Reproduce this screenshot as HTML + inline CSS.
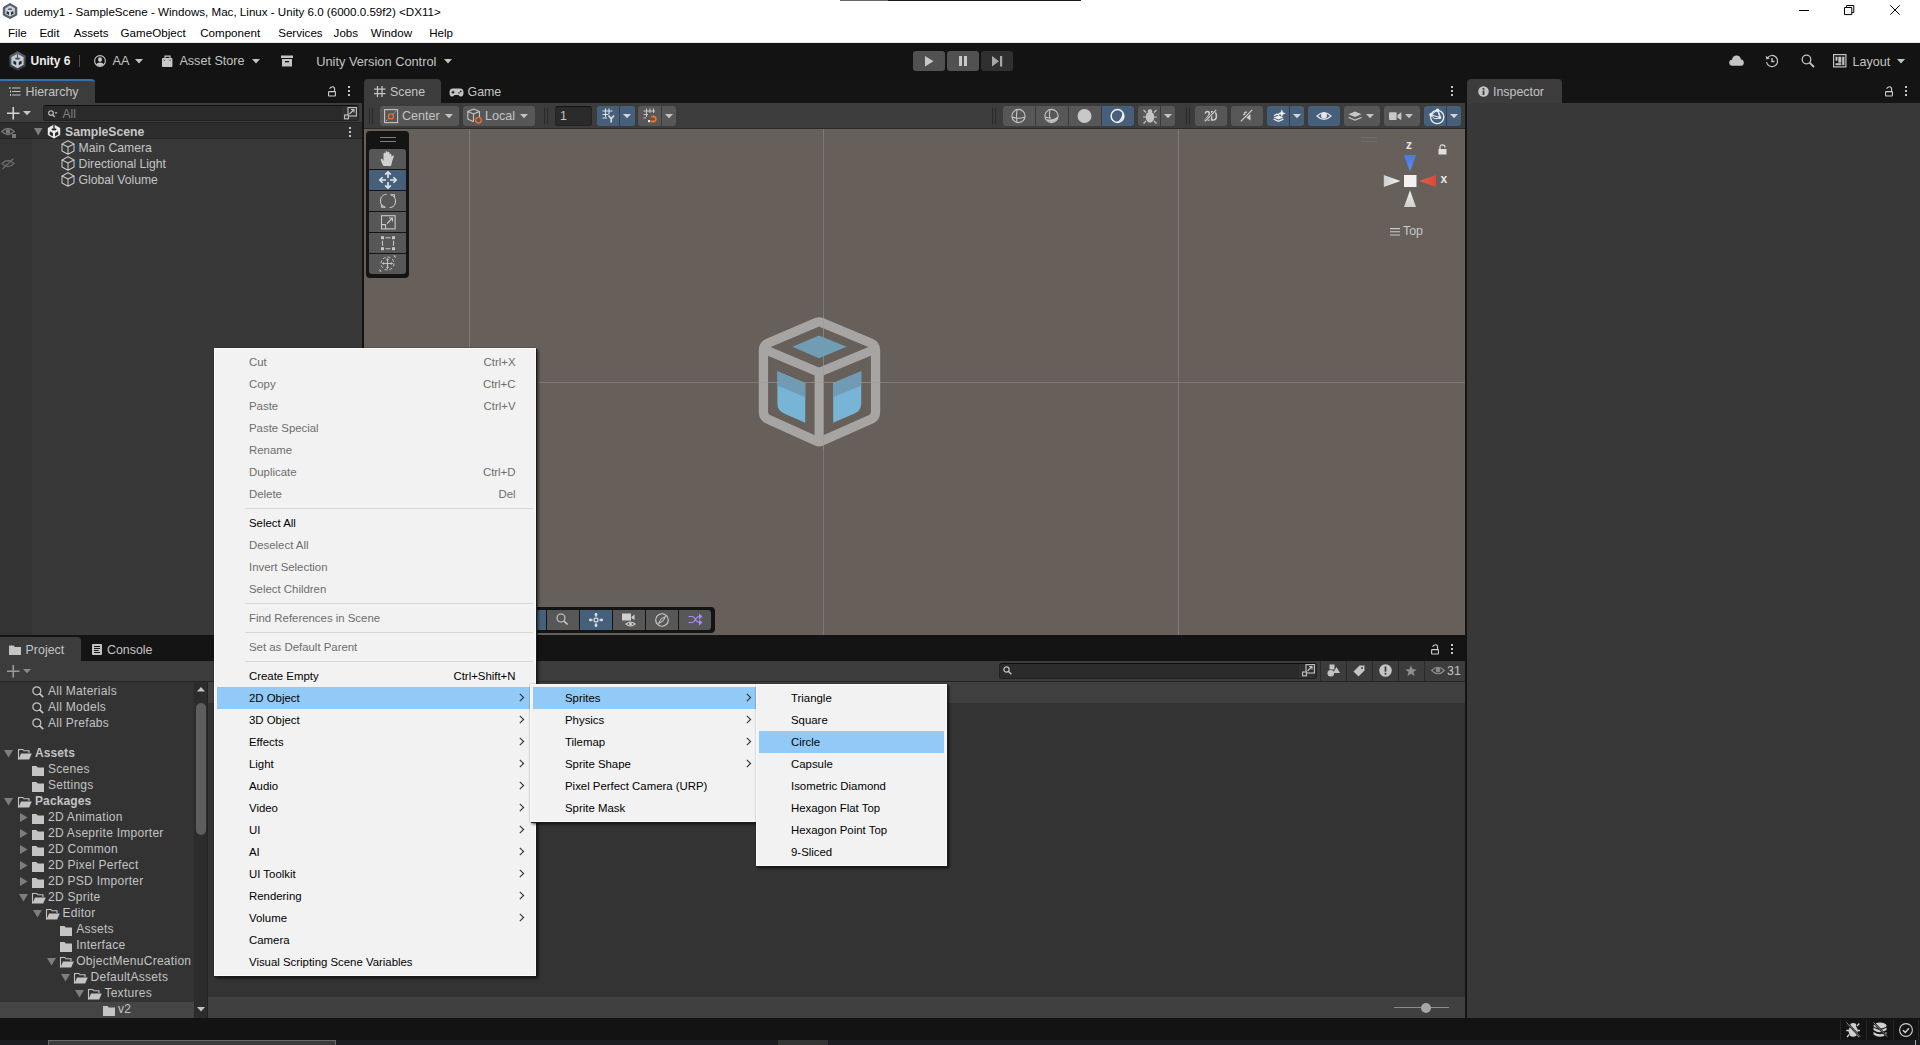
<!DOCTYPE html>
<html><head><meta charset="utf-8">
<style>
*{box-sizing:border-box}
html,body{margin:0;padding:0}
body{width:1920px;height:1045px;overflow:hidden;position:relative;background:#141414;font-family:"Liberation Sans",sans-serif;font-size:12px;color:#c4c4c4}
.a{position:absolute}
.t{position:absolute;white-space:nowrap;line-height:1}
svg{position:absolute;overflow:visible}
</style></head><body>

<!-- TITLE + MENU BAR -->
<div class="a" style="left:0;top:0;width:1920px;height:43px;background:#fff"></div>
<div class="a" style="left:840px;top:0;width:48px;height:1px;background:#666"></div><div class="a" style="left:888px;top:0;width:193px;height:1px;background:#1a1a1a"></div>


<!-- title -->
<svg style="left:3px;top:3px" width="15" height="16" viewBox="0 0 15 16"><path d="M7 0.5 L13.8 4.4 L13.8 12 L7 15.6 L0.3 12 L0.3 4.4 Z" fill="#5a6570" stroke="#3c444c" stroke-width="0.8"/><path d="M7 2.6 L11.8 5.3 L11.8 11 L7 13.6 L2.3 11 L2.3 5.3 Z" fill="#cdd3da"/><ellipse cx="7" cy="6.2" rx="2.2" ry="0.9" fill="#5a6570"/><path d="M3.8 8 L6 9.2 L6 12 L3.5 10.6 Z M10.2 8 L8 9.2 L8 12 L10.5 10.6 Z" fill="#2a2f34"/></svg>
<div class="t" style="left:24px;top:6px;font-size:11.6px;color:#000">udemy1 - SampleScene - Windows, Mac, Linux - Unity 6.0 (6000.0.59f2) &lt;DX11&gt;</div>
<div class="t" style="left:8px;top:26.6px;font-size:11.6px;color:#000">File</div>
<div class="t" style="left:39.4px;top:26.6px;font-size:11.6px;color:#000">Edit</div>
<div class="t" style="left:73.8px;top:26.6px;font-size:11.6px;color:#000">Assets</div>
<div class="t" style="left:120.6px;top:26.6px;font-size:11.6px;color:#000">GameObject</div>
<div class="t" style="left:200.2px;top:26.6px;font-size:11.6px;color:#000">Component</div>
<div class="t" style="left:278.2px;top:26.6px;font-size:11.6px;color:#000">Services</div>
<div class="t" style="left:333.6px;top:26.6px;font-size:11.6px;color:#000">Jobs</div>
<div class="t" style="left:370.8px;top:26.6px;font-size:11.6px;color:#000">Window</div>
<div class="t" style="left:429.2px;top:26.6px;font-size:11.6px;color:#000">Help</div>
<div class="a" style="left:0;top:42px;width:1920px;height:1px;background:#e8e8e8"></div>
<!-- window controls -->
<div class="a" style="left:1799px;top:10px;width:10px;height:1px;background:#000"></div>
<svg style="left:1844px;top:5px" width="11" height="10" viewBox="0 0 11 10"><path d="M0.5 2.5H7.8V9.6H0.5Z M2.6 2.5V0.5H9.8V7.6H7.8" fill="none" stroke="#000" stroke-width="1"/></svg>
<svg style="left:1890px;top:5px" width="10" height="10" viewBox="0 0 10 10"><path d="M0.3 0.3L9.7 9.7 M9.7 0.3L0.3 9.7" stroke="#000" stroke-width="1"/></svg>

<!-- MAIN TOOLBAR -->
<div class="a" style="left:0;top:43px;width:1920px;height:36px;background:#131313"></div>


<svg style="left:9px;top:51px" width="17" height="20" viewBox="0 0 17 20"><defs><linearGradient id="ulg" x1="0" y1="0" x2="0" y2="1"><stop offset="0" stop-color="#5d6874"/><stop offset="1" stop-color="#2e343a"/></linearGradient></defs><path d="M8.5 0.2 L16.6 4.8 L16.6 15.2 L8.5 19.8 L0.4 15.2 L0.4 4.8 Z" fill="url(#ulg)"/><path d="M8.5 2.8 L14.6 6.3 L14.6 13.7 L8.5 17.2 L2.4 13.7 L2.4 6.3 Z" fill="#c6cbd2"/><path d="M8.5 2.8V7" stroke="#4d5763" stroke-width="1.1"/><ellipse cx="8.5" cy="7.6" rx="2.6" ry="1.2" fill="#4d5763"/><path d="M4.6 9.6 L7.2 11 L7.2 14.2 L4.2 12.6 Z M12.4 9.6 L9.8 11 L9.8 14.2 L12.8 12.6 Z" fill="#22272c"/></svg>
<div class="t" style="left:30.5px;top:55.2px;font-size:12px;font-weight:bold;color:#eee">Unity 6</div>
<div class="a" style="left:79px;top:55px;width:1px;height:12px;background:#4a4a4a"></div>
<svg style="left:94px;top:55px" width="12" height="12" viewBox="0 0 12 12"><circle cx="6" cy="6" r="5.4" fill="none" stroke="#c8c8c8" stroke-width="1.1"/><ellipse cx="6" cy="4.6" rx="2" ry="2.3" fill="#c8c8c8"/><path d="M1.8 9.2Q6 6 10.2 9.2Q6 12.8 1.8 9.2Z" fill="#c8c8c8"/></svg>
<div class="t" style="left:112.5px;top:55.3px;font-size:12.6px;color:#c4c4c4">AA</div>
<svg style="left:135px;top:59px" width="8" height="5" viewBox="0 0 8 5"><path d="M0 0H8L4 4.5Z" fill="#c4c4c4"/></svg>
<svg style="left:162px;top:55px" width="11" height="12" viewBox="0 0 11 12"><path d="M3 3.2V1.2H8V3.2" fill="none" stroke="#c8c8c8" stroke-width="1.2"/><rect x="0" y="3" width="10.4" height="9" rx="0.8" fill="#c8c8c8"/><path d="M1.6 4.6L2.4 5.6L3.2 4.6 M7.2 4.6L8 5.6L8.8 4.6" fill="none" stroke="#131313" stroke-width="0.6"/></svg>
<div class="t" style="left:179.4px;top:55.3px;font-size:12.6px;color:#c4c4c4">Asset Store</div>
<svg style="left:252px;top:59px" width="8" height="5" viewBox="0 0 8 5"><path d="M0 0H8L4 4.5Z" fill="#c4c4c4"/></svg>
<svg style="left:281px;top:55px" width="12" height="12" viewBox="0 0 12 12"><rect x="0" y="0.5" width="12" height="2.5" fill="#c4c4c4"/><path d="M1 4 H11 V11.5 H1 Z" fill="#c4c4c4"/><rect x="4" y="6" width="4" height="1.3" fill="#131313"/></svg>
<div class="t" style="left:316.2px;top:55.6px;font-size:12.8px;color:#c4c4c4">Unity Version Control</div>
<svg style="left:444px;top:59px" width="8" height="5" viewBox="0 0 8 5"><path d="M0 0H8L4 4.5Z" fill="#c4c4c4"/></svg>
<!-- play buttons -->
<div class="a" style="left:913px;top:51px;width:32px;height:20px;border-radius:3px;background:#515151"></div>
<div class="a" style="left:947px;top:51px;width:32px;height:20px;border-radius:3px;background:#515151"></div>
<div class="a" style="left:981px;top:51px;width:32px;height:20px;border-radius:3px;background:#303030"></div>
<svg style="left:925px;top:56px" width="9" height="11" viewBox="0 0 9 11"><path d="M0 0 L8.5 5.25 L0 10.5Z" fill="#c8c8c8"/></svg>
<div class="a" style="left:959px;top:56px;width:3px;height:10px;background:#c8c8c8"></div>
<div class="a" style="left:964px;top:56px;width:3px;height:10px;background:#c8c8c8"></div>
<svg style="left:992px;top:56px" width="11" height="11" viewBox="0 0 11 11"><path d="M0 0 L7 5.25 L0 10.5Z" fill="#a8a8a8"/><rect x="8" y="0" width="2.2" height="10.5" fill="#a8a8a8"/></svg>
<!-- right toolbar icons -->
<svg style="left:1729px;top:55px" width="15" height="11" viewBox="0 0 15 11"><path d="M3.5 10.8 Q0.2 10.8 0.2 7.8 Q0.2 5 3 4.8 Q3.8 0.6 7.8 0.6 Q11.2 0.6 12 4.5 Q14.8 4.8 14.8 7.8 Q14.8 10.8 11.8 10.8Z" fill="#c4c4c4"/></svg>
<svg style="left:1765px;top:54px" width="14" height="14" viewBox="0 0 14 14"><path d="M2.2 4.2 A5.6 5.6 0 1 1 1.5 8" fill="none" stroke="#c4c4c4" stroke-width="1.2"/><path d="M0.6 1.8 L1.4 5.4 L4.8 4.4Z" fill="#c4c4c4"/><path d="M7 4 V7.5 H9.5" fill="none" stroke="#c4c4c4" stroke-width="1.4"/></svg>
<svg style="left:1801px;top:54px" width="14" height="14" viewBox="0 0 14 14"><circle cx="5.5" cy="5.5" r="4.3" fill="none" stroke="#c4c4c4" stroke-width="1.3"/><path d="M8.6 8.6 L13 13" stroke="#c4c4c4" stroke-width="1.9"/></svg>
<svg style="left:1833px;top:54px" width="14" height="14" viewBox="0 0 14 14"><rect x="0.6" y="0.6" width="12.3" height="12.3" fill="none" stroke="#c4c4c4" stroke-width="1.2"/><rect x="2.5" y="2.7" width="2" height="4" fill="#c4c4c4"/><rect x="5.3" y="2.7" width="3" height="6" fill="#c4c4c4"/><rect x="9.2" y="2.7" width="2.2" height="8.5" fill="#c4c4c4"/><rect x="2.5" y="9.2" width="5.8" height="2" fill="#c4c4c4"/></svg>
<div class="t" style="left:1852.5px;top:55.6px;font-size:12.6px;color:#c4c4c4">Layout</div>
<svg style="left:1897px;top:59px" width="8" height="5" viewBox="0 0 8 5"><path d="M0 0H8L4 4.5Z" fill="#c4c4c4"/></svg>

<!-- HIERARCHY PANEL -->
<div class="a" id="hier" style="left:0;top:103px;width:362px;height:532px;background:#383838"></div>
<!-- hierarchy tab -->
<div class="a" style="left:0;top:79px;width:95px;height:24px;background:#3c3c3c;border-top:2px solid #3273ad;border-radius:0 4px 0 0"></div>
<svg style="left:9px;top:87px" width="12" height="9" viewBox="0 0 12 9"><path d="M3 1H11.5 M3 4.5H11.5 M3 8H11.5" stroke="#c4c4c4" stroke-width="1.2"/><path d="M0 1H1.6 M0.8 0.2V1.8 M1.5 3.5V5.5 M1.5 7V9" stroke="#c4c4c4" stroke-width="1"/></svg>
<div class="t" style="left:25.5px;top:85.5px;font-size:12.4px;color:#c4c4c4">Hierarchy</div>
<svg style="left:328px;top:86px" width="9" height="11" viewBox="0 0 9 11"><path d="M1.5 2.6Q3 0.8 4.6 0.8Q6.6 0.8 6.6 3.2V6" fill="none" stroke="#cfcfcf" stroke-width="1.1"/><rect x="0.6" y="5.6" width="6.8" height="4.4" rx="0.6" fill="none" stroke="#cfcfcf" stroke-width="1.1"/></svg>
<div class="a" style="left:348px;top:86px;width:2px;height:2px;background:#c4c4c4;box-shadow:0 4px 0 #c4c4c4,0 8px 0 #c4c4c4"></div>
<!-- hierarchy toolbar -->
<div class="a" style="left:0;top:103px;width:362px;height:20px;background:#3c3c3c;border-bottom:1px solid #242424"></div>
<svg style="left:7px;top:107px" width="13" height="13" viewBox="0 0 13 13"><path d="M6.25 0V12.5 M0 6.25H12.5" stroke="#d2d2d2" stroke-width="1.6"/></svg>
<svg style="left:23px;top:111px" width="8" height="5" viewBox="0 0 8 5"><path d="M0 0H8L4 4.3Z" fill="#c4c4c4"/></svg>
<div class="a" style="left:43px;top:105px;width:316px;height:16px;background:#2a2a2a;border:1px solid #212121;border-top-color:#0f0f0f;border-radius:3px"></div>
<svg style="left:48px;top:110px" width="10" height="8" viewBox="0 0 10 8"><circle cx="3" cy="3" r="2.3" fill="none" stroke="#c4c4c4" stroke-width="1.1"/><path d="M4.6 4.6L6.8 7" stroke="#c4c4c4" stroke-width="1.2"/><path d="M6.5 2.3H9.5L8 4Z" fill="#c4c4c4"/></svg>
<div class="t" style="left:62.5px;top:107.8px;font-size:12px;color:#808080">All</div>
<div class="a" style="left:342px;top:106px;width:16px;height:14px;background:#303030;border-radius:0 2px 2px 0"></div>
<svg style="left:344px;top:107px" width="13" height="13" viewBox="0 0 13 13"><rect x="4" y="0.6" width="8.4" height="8.4" fill="none" stroke="#c4c4c4" stroke-width="1.1"/><rect x="0.6" y="8" width="3.8" height="3.8" fill="#303030" stroke="#c4c4c4" stroke-width="1.1"/><path d="M5.5 7L10 2.5 M7 2.5H10V5.5" fill="none" stroke="#c4c4c4" stroke-width="1.1"/></svg>
<!-- hierarchy body -->
<div class="a" style="left:0;top:123px;width:32px;height:512px;background:#333"></div>
<div class="a" style="left:0;top:123px;width:362px;height:16px;background:#2d2d2d;border-bottom:1px solid #242424"></div>
<svg style="left:1px;top:127px" width="15" height="11" viewBox="0 0 15 11"><path d="M0.8 4.5Q7 -1.5 13.2 4.5Q7 10.5 0.8 4.5Z" fill="none" stroke="#7a7a7a" stroke-width="1.2"/><circle cx="7" cy="4.5" r="2.3" fill="#7a7a7a"/><rect x="11" y="7" width="4" height="4" fill="#7a7a7a"/></svg>
<svg style="left:34px;top:128px" width="9" height="8" viewBox="0 0 9 8"><path d="M0 0H8.5L4.25 7.5Z" fill="#7e7e7e"/></svg>
<svg style="left:47px;top:124px" width="14" height="15" viewBox="0 0 14 15"><path d="M7 0.5 L13.2 4 L13.2 11 L7 14.5 L0.8 11 L0.8 4 Z" fill="#ececec"/><path d="M7 0.5V4.6" stroke="#2d2d2d" stroke-width="1.4"/><ellipse cx="7" cy="5.4" rx="2.6" ry="1.1" fill="#2d2d2d"/><path d="M3 7.3 L6 8.9 L6 12.5 L2.5 10.6 Z M11 7.3 L8 8.9 L8 12.5 L11.5 10.6 Z" fill="#2d2d2d"/></svg>
<div class="t" style="left:65px;top:126px;font-size:12.2px;font-weight:bold;color:#c8c8c8">SampleScene</div>
<div class="a" style="left:349px;top:127px;width:2px;height:2px;background:#c4c4c4;box-shadow:0 4px 0 #c4c4c4,0 8px 0 #c4c4c4"></div>
<svg style="left:1px;top:157px" width="15" height="13" viewBox="0 0 15 13"><path d="M1 6.5Q7 0.5 13 6.5Q7 12.5 1 6.5Z" fill="none" stroke="#6a6a6a" stroke-width="1.2"/><path d="M1.5 12L12.5 1.5" stroke="#6a6a6a" stroke-width="1.3"/></svg>
<svg style="left:61px;top:140px" width="14" height="15" viewBox="0 0 14 15"><path d="M7 0.8L13 3.9V11.1L7 14.2L1 11.1V3.9Z M1 3.9L7 7L13 3.9 M7 7V14.2" fill="none" stroke="#c4c4c4" stroke-width="1.1" stroke-linejoin="round"/></svg><div class="t" style="left:78.6px;top:141.6px;font-size:12.2px;color:#c4c4c4">Main Camera</div>
<svg style="left:61px;top:156px" width="14" height="15" viewBox="0 0 14 15"><path d="M7 0.8L13 3.9V11.1L7 14.2L1 11.1V3.9Z M1 3.9L7 7L13 3.9 M7 7V14.2" fill="none" stroke="#c4c4c4" stroke-width="1.1" stroke-linejoin="round"/></svg><div class="t" style="left:78.6px;top:157.6px;font-size:12.2px;color:#c4c4c4">Directional Light</div>
<svg style="left:61px;top:172px" width="14" height="15" viewBox="0 0 14 15"><path d="M7 0.8L13 3.9V11.1L7 14.2L1 11.1V3.9Z M1 3.9L7 7L13 3.9 M7 7V14.2" fill="none" stroke="#c4c4c4" stroke-width="1.1" stroke-linejoin="round"/></svg><div class="t" style="left:78.6px;top:173.6px;font-size:12.2px;color:#c4c4c4">Global Volume</div>


<!-- SCENE PANEL -->
<div class="a" id="scene" style="left:364px;top:103px;width:1101px;height:532px;background:#3c3c3c"></div>
<div class="a" style="left:364px;top:79px;width:77px;height:24px;background:#3c3c3c;border-radius:4px 4px 0 0"></div>
<svg style="left:374px;top:86px" width="12" height="11" viewBox="0 0 12 11"><path d="M3.5 0V11 M8 0V11 M0 3.2H11.5 M0 7.6H11.5" stroke="#c4c4c4" stroke-width="1.3"/></svg>
<div class="t" style="left:390px;top:85.7px;font-size:12.4px;color:#c4c4c4">Scene</div>
<svg style="left:449px;top:88px" width="15" height="9" viewBox="0 0 15 9"><path d="M4 0.5H11Q14.5 0.5 14.5 4.5Q14.5 8.5 12 8.5Q10.5 8.5 9.5 7H5.5Q4.5 8.5 3 8.5Q0.5 8.5 0.5 4.5Q0.5 0.5 4 0.5Z" fill="#c4c4c4"/><path d="M2.5 4.3H5.5M4 2.8V5.8" stroke="#131313" stroke-width="1.1"/><circle cx="10" cy="5" r="0.8" fill="#131313"/><circle cx="11.8" cy="3.4" r="0.8" fill="#131313"/></svg>
<div class="t" style="left:467.5px;top:85.7px;font-size:12.4px;color:#c4c4c4">Game</div>
<div class="a" style="left:1451px;top:86px;width:2px;height:2px;background:#c4c4c4;box-shadow:0 4px 0 #c4c4c4,0 8px 0 #c4c4c4"></div>
<div class="a" style="left:364px;top:128px;width:1101px;height:1px;background:#2a2a2a"></div>
<div class="a" style="left:369px;top:108px;width:1px;height:16px;background:#2a2a2a;box-shadow:3px 0 0 #2a2a2a"></div>
<div class="a" style="left:380px;top:106px;width:79px;height:20px;background:#575757;border-radius:3px"></div>
<svg style="left:384px;top:109px" width="16" height="16" viewBox="0 0 16 16"><rect x="0.6" y="0.6" width="13" height="13" fill="none" stroke="#c4c4c4" stroke-width="1.1"/><path d="M2.2 12L12 2.2" stroke="#c4c4c4" stroke-width="0.9" stroke-dasharray="1.5 1"/><circle cx="7" cy="7.4" r="2.5" fill="#575757" stroke="#f06b2c" stroke-width="1.3"/></svg>
<div class="t" style="left:402px;top:109.7px;font-size:12.6px;color:#c4c4c4">Center</div>
<svg style="left:445px;top:114px" width="8" height="5" viewBox="0 0 8 5"><path d="M0 0H8L4 4.3Z" fill="#c4c4c4"/></svg>
<div class="a" style="left:463px;top:106px;width:72px;height:20px;background:#575757;border-radius:3px"></div>
<svg style="left:467px;top:108px" width="16" height="16" viewBox="0 0 16 16"><path d="M6.5 1L12.5 3.5V9.5 M6.5 1L0.8 3.5V11L6.5 13.8 M0.8 3.5L6.5 6V13.8 M6.5 6L12.5 3.5" fill="none" stroke="#c4c4c4" stroke-width="1.1" stroke-linejoin="round"/><circle cx="11.5" cy="12.2" r="2.8" fill="#575757" stroke="#f06b2c" stroke-width="1.3"/></svg>
<div class="t" style="left:485px;top:109.7px;font-size:12.6px;color:#c4c4c4">Local</div>
<svg style="left:520px;top:114px" width="8" height="5" viewBox="0 0 8 5"><path d="M0 0H8L4 4.3Z" fill="#c4c4c4"/></svg>
<div class="a" style="left:544px;top:108px;width:1px;height:16px;background:#2a2a2a;box-shadow:3px 0 0 #2a2a2a"></div>
<div class="a" style="left:555px;top:106px;width:37px;height:20px;background:#2a2a2a;border:1px solid #232323;border-top-color:#121212;border-radius:3px"></div>
<div class="t" style="left:560px;top:109.7px;font-size:12.4px;color:#c4c4c4">1</div>
<div class="a" style="left:597px;top:106px;width:22px;height:20px;background:#46607c;border-radius:3px 0 0 3px"></div>
<div class="a" style="left:620px;top:106px;width:15px;height:20px;background:#46607c;border-radius:0 3px 3px 0"></div>
<svg style="left:602px;top:108px" width="14" height="15" viewBox="0 0 14 15"><path d="M3.5 0.5V9 M7 0.5V6 M0.5 3H10.5 M0.5 6.5H6.5 M0.5 10H5" stroke="#e0e0e0" stroke-width="1.1"/><path d="M6.5 7.5L9.2 10.8L12 7.5 M9.2 10.8V14.5" fill="none" stroke="#e0e0e0" stroke-width="1.6"/></svg>
<svg style="left:623px;top:114px" width="8" height="5" viewBox="0 0 8 5"><path d="M0 0H8L4 4.3Z" fill="#d4d4d4"/></svg>
<div class="a" style="left:638px;top:106px;width:23px;height:20px;background:#575757;border-radius:3px 0 0 3px"></div>
<div class="a" style="left:662px;top:106px;width:14px;height:20px;background:#575757;border-radius:0 3px 3px 0"></div>
<svg style="left:643px;top:108px" width="14" height="15" viewBox="0 0 14 15"><path d="M3.5 0.5V9 M7 0.5V5 M10.5 0.5V5 M0.5 3H12 M0.5 6.5H5 M0.5 10H3" stroke="#c4c4c4" stroke-width="1.1"/><path d="M8 8.5H10.5Q12.8 8.5 12.8 11Q12.8 13.5 10.5 13.5H8" fill="none" stroke="#f06b2c" stroke-width="1.8"/><rect x="5" y="12" width="2.2" height="2.2" fill="#e8e8e8"/></svg>
<svg style="left:665px;top:114px" width="8" height="5" viewBox="0 0 8 5"><path d="M0 0H8L4 4.3Z" fill="#c4c4c4"/></svg>
<div class="a" style="left:992px;top:108px;width:1px;height:16px;background:#2a2a2a;box-shadow:3px 0 0 #2a2a2a"></div>
<div class="a" style="left:1003px;top:106px;width:32px;height:20px;background:#575757;border-radius:3px 0 0 3px"></div>
<div class="a" style="left:1036px;top:106px;width:32px;height:20px;background:#575757;border-radius:0"></div>
<div class="a" style="left:1069px;top:106px;width:32px;height:20px;background:#575757;border-radius:0"></div>
<div class="a" style="left:1102px;top:106px;width:32px;height:20px;background:#46607c;border-radius:0 3px 3px 0"></div>
<svg style="left:1011px;top:108px" width="16" height="16" viewBox="0 0 16 16"><circle cx="7.5" cy="8" r="6.6" fill="none" stroke="#c4c4c4" stroke-width="1.1"/><path d="M1.2 9Q7.5 11.5 13.8 9 M6 1.6Q5 8 6 14.5" fill="none" stroke="#c4c4c4" stroke-width="1.1"/></svg>
<svg style="left:1044px;top:108px" width="16" height="16" viewBox="0 0 16 16"><circle cx="7.5" cy="8" r="6.6" fill="none" stroke="#c4c4c4" stroke-width="1.1"/><path d="M2 11Q8 13 14 8.5 A6.6 6.6 0 0 1 2 11Z" fill="#c4c4c4"/><path d="M1.2 9Q5 10.5 7 10 M6 1.6Q5 6 5.8 10.5" fill="none" stroke="#c4c4c4" stroke-width="1.1"/></svg>
<svg style="left:1077px;top:108px" width="16" height="16" viewBox="0 0 16 16"><circle cx="7.5" cy="8" r="7" fill="#c8c8c8"/></svg>
<svg style="left:1110px;top:108px" width="16" height="16" viewBox="0 0 16 16"><circle cx="7.5" cy="8" r="6.4" fill="none" stroke="#f0f0f0" stroke-width="1.5"/><path d="M14 7Q13 14 6 14.4Q12 12 12.5 4.5Z" fill="#f0f0f0"/></svg>
<div class="a" style="left:1138px;top:106px;width:22px;height:20px;background:#575757;border-radius:3px 0 0 3px"></div>
<div class="a" style="left:1161px;top:106px;width:14px;height:20px;background:#575757;border-radius:0 3px 3px 0"></div>
<svg style="left:1143px;top:108px" width="14" height="16" viewBox="0 0 14 16"><ellipse cx="7" cy="9.2" rx="4.3" ry="5.5" fill="#c4c4c4"/><circle cx="7" cy="3.5" r="2.3" fill="#c4c4c4"/><path d="M0.5 2L3 4.5 M13.5 2L11 4.5 M0 9H3 M14 9H11 M0.5 15.5L3 13 M13.5 15.5L11 13" stroke="#c4c4c4" stroke-width="1.1"/></svg>
<svg style="left:1164px;top:114px" width="8" height="5" viewBox="0 0 8 5"><path d="M0 0H8L4 4.3Z" fill="#c4c4c4"/></svg>
<div class="a" style="left:1186px;top:108px;width:1px;height:16px;background:#2a2a2a;box-shadow:3px 0 0 #2a2a2a"></div>
<div class="a" style="left:1195px;top:106px;width:32px;height:20px;background:#575757;border-radius:3px"></div>
<svg style="left:1204px;top:109px" width="14" height="13" viewBox="0 0 14 13"><path d="M1.3 4.6Q1.5 2.6 3.4 2.6Q5.3 2.6 5.3 4.4Q5.3 6 1.2 11H5.6 M7.6 2.8V11H8.8Q12.4 11 12.4 6.9Q12.4 2.8 8.8 2.8Z" fill="none" stroke="#cfcfcf" stroke-width="1.5"/><path d="M1 12.4L12.2 0.8" stroke="#575757" stroke-width="2.4"/><path d="M1 12.4L12.2 0.8" stroke="#cfcfcf" stroke-width="1.2"/></svg>
<div class="a" style="left:1231px;top:106px;width:32px;height:20px;background:#575757;border-radius:3px"></div>
<svg style="left:1240px;top:109px" width="14" height="13" viewBox="0 0 14 13"><path d="M6 8.5L10.5 5V11.5Z" fill="#cfcfcf"/><path d="M3.2 6Q4.2 5 5.5 5.2 M4 4Q5.5 2.8 7 3.2" fill="none" stroke="#cfcfcf" stroke-width="1.2"/><path d="M0.8 12.4L12.2 0.8" stroke="#575757" stroke-width="2.4"/><path d="M0.8 12.4L12.2 0.8" stroke="#cfcfcf" stroke-width="1.2"/></svg>
<div class="a" style="left:1267px;top:106px;width:22px;height:20px;background:#46607c;border-radius:3px 0 0 3px"></div>
<div class="a" style="left:1290px;top:106px;width:14px;height:20px;background:#46607c;border-radius:0 3px 3px 0"></div>
<svg style="left:1273px;top:109px" width="14" height="13" viewBox="0 0 14 13"><path d="M0.5 8.5L5.5 6.5L10.5 8.5L5.5 10.5Z" fill="#ececec"/><path d="M0.6 10.2L5.5 12.4L10.4 10.2" fill="none" stroke="#ececec" stroke-width="1.3"/><path d="M1 6.8L3.5 5.2L6.5 6" fill="none" stroke="#ececec" stroke-width="1.3"/><path d="M8.8 0.3L9.9 3.3L12.9 4.4L9.9 5.5L8.8 8.5L7.7 5.5L4.7 4.4L7.7 3.3Z" fill="#ececec"/></svg>
<svg style="left:1293px;top:114px" width="8" height="5" viewBox="0 0 8 5"><path d="M0 0H8L4 4.3Z" fill="#d4d4d4"/></svg>
<div class="a" style="left:1308px;top:106px;width:32px;height:20px;background:#46607c;border-radius:3px"></div>
<svg style="left:1316px;top:111px" width="16" height="10" viewBox="0 0 16 10"><path d="M1 5Q8 -1.8 15 5Q8 11.8 1 5Z" fill="none" stroke="#e6e6e6" stroke-width="1.2"/><circle cx="8" cy="4.6" r="3" fill="#e6e6e6"/></svg>
<div class="a" style="left:1344px;top:106px;width:36px;height:20px;background:#575757;border-radius:3px"></div>
<svg style="left:1348px;top:111px" width="14" height="11" viewBox="0 0 14 11"><path d="M0.5 3.2L7 0.5L13.5 3.2L7 6Z" fill="#c8c8c8"/><path d="M0.5 5.8L7 8.6L13.5 5.8V7L7 9.8L0.5 7Z" fill="#c8c8c8"/></svg>
<svg style="left:1366px;top:114px" width="8" height="5" viewBox="0 0 8 5"><path d="M0 0H8L4 4.3Z" fill="#c4c4c4"/></svg>
<div class="a" style="left:1384px;top:106px;width:36px;height:20px;background:#575757;border-radius:3px"></div>
<svg style="left:1389px;top:112px" width="13" height="9" viewBox="0 0 13 9"><rect x="0" y="0.3" width="7.6" height="7.8" rx="1" fill="#c8c8c8"/><path d="M8.5 3L12.3 0.3V8.2L8.5 5.5Z" fill="#c8c8c8"/></svg>
<svg style="left:1405px;top:114px" width="8" height="5" viewBox="0 0 8 5"><path d="M0 0H8L4 4.3Z" fill="#c4c4c4"/></svg>
<div class="a" style="left:1424px;top:106px;width:22px;height:20px;background:#46607c;border-radius:3px 0 0 3px"></div>
<div class="a" style="left:1447px;top:106px;width:14px;height:20px;background:#46607c;border-radius:0 3px 3px 0"></div>
<svg style="left:1429px;top:108px" width="16" height="17" viewBox="0 0 16 17"><circle cx="8.2" cy="9" r="6.6" fill="none" stroke="#ececec" stroke-width="1.3"/><path d="M8.5 2.2L2 6.8L10.8 9.5Z M8.5 2.2Q12 8 10.8 9.5 M2 6.8Q5 13 10.8 9.5" fill="none" stroke="#ececec" stroke-width="1"/><circle cx="8.5" cy="2.2" r="1.8" fill="#ececec"/><circle cx="2" cy="6.8" r="1.8" fill="#ececec"/><circle cx="10.8" cy="9.5" r="1.6" fill="#ececec"/></svg>
<svg style="left:1450px;top:114px" width="8" height="5" viewBox="0 0 8 5"><path d="M0 0H8L4 4.3Z" fill="#d4d4d4"/></svg>
<div class="a" style="left:364px;top:129px;width:1101px;height:506px;background:#67605a"></div>
<div class="a" style="left:469px;top:129px;width:1px;height:506px;background:rgba(170,170,170,0.32)"></div>
<div class="a" style="left:823px;top:129px;width:1px;height:506px;background:rgba(170,170,170,0.32)"></div>
<div class="a" style="left:1178px;top:129px;width:1px;height:506px;background:rgba(170,170,170,0.32)"></div>
<div class="a" style="left:364px;top:382px;width:1101px;height:1px;background:rgba(170,170,170,0.32)"></div>



<!-- tools overlay -->
<div class="a" style="left:366px;top:131px;width:43px;height:147px;background:#141414;border-radius:4px"></div>
<div class="a" style="left:380px;top:137px;width:16px;height:1px;background:#808080;box-shadow:0 4px 0 #808080"></div>
<div class="a" style="left:369px;top:149px;width:37px;height:20px;background:#575757;border-radius:3px 3px 0 0"></div>
<div class="a" style="left:369px;top:170px;width:37px;height:20px;background:#46607c"></div>
<div class="a" style="left:369px;top:191px;width:37px;height:20px;background:#575757"></div>
<div class="a" style="left:369px;top:212px;width:37px;height:20px;background:#575757"></div>
<div class="a" style="left:369px;top:233px;width:37px;height:20px;background:#575757"></div>
<div class="a" style="left:369px;top:254px;width:37px;height:20px;background:#575757;border-radius:0 0 3px 3px"></div>
<svg style="left:380px;top:151px" width="15" height="16" viewBox="0 0 15 16"><path d="M3.5 15Q1.5 12 0.8 9Q0.5 7.5 1.8 7.8Q2.8 8.2 3.5 10V3Q3.5 1.8 4.5 1.8Q5.5 1.8 5.5 3V7V1.5Q5.5 0.3 6.5 0.3Q7.5 0.3 7.5 1.5V7V2Q7.5 0.8 8.5 0.8Q9.5 0.8 9.5 2V7.5V4Q9.5 2.8 10.5 2.8Q11.5 2.8 11.5 4V6Q12.5 4 13.5 4.5Q14.3 5 13.5 6.5Q12 10 11 15Z" fill="#d0d0d0"/></svg>
<svg style="left:378px;top:170px" width="20" height="20" viewBox="0 0 20 20"><path d="M10 2.5V8 M10 12V17.5 M2.5 10H8 M12 10H17.5" stroke="#e6e6e6" stroke-width="1.6"/><path d="M7.2 4.6L10 1.8L12.8 4.6 M7.2 15.4L10 18.2L12.8 15.4 M4.6 7.2L1.8 10L4.6 12.8 M15.4 7.2L18.2 10L15.4 12.8" fill="none" stroke="#e6e6e6" stroke-width="1.6"/></svg>
<svg style="left:378px;top:191px" width="20" height="20" viewBox="0 0 20 20"><path d="M8.5 3.2A6.6 6.6 0 0 0 7.5 16.2" fill="none" stroke="#c8c8c8" stroke-width="1.1"/><path d="M11.5 16.8A6.6 6.6 0 0 0 12.5 3.8" fill="none" stroke="#c8c8c8" stroke-width="1.1"/><path d="M3.5 13.8V16.3H7.2 M16.5 6.2V3.7H12.8" fill="none" stroke="#c8c8c8" stroke-width="1.1"/></svg>
<svg style="left:378px;top:212px" width="20" height="20" viewBox="0 0 20 20"><rect x="3.5" y="3.7" width="13.6" height="13.2" fill="none" stroke="#c8c8c8" stroke-width="1.1"/><path d="M3.5 12.6H7.6V16.9" fill="none" stroke="#c8c8c8" stroke-width="1.1"/><path d="M9 11.5L14.5 6 M11 6H14.5V9.5" fill="none" stroke="#c8c8c8" stroke-width="1.1"/></svg>
<svg style="left:378px;top:233px" width="20" height="20" viewBox="0 0 20 20"><rect x="3" y="3.2" width="3" height="3" fill="#c8c8c8"/><rect x="14" y="3.2" width="3" height="3" fill="#c8c8c8"/><rect x="3" y="14.2" width="3" height="3" fill="#c8c8c8"/><rect x="14" y="14.2" width="3" height="3" fill="#c8c8c8"/><path d="M7.5 4.7H12.5 M7.5 15.7H12.5 M4.5 7.7V12.7 M15.5 7.7V12.7" stroke="#c8c8c8" stroke-width="1.1"/></svg>
<svg style="left:379px;top:255px" width="17" height="17" viewBox="0 0 17 17"><circle cx="8.5" cy="8.5" r="6.5" fill="none" stroke="#c4c4c4" stroke-width="1" stroke-dasharray="3 2"/><path d="M8.5 3.5V13.5 M3.5 8.5H13.5" stroke="#c4c4c4" stroke-width="1.1"/><path d="M8.5 3L7 5H10Z M8.5 14L7 12H10Z M3 8.5L5 7V10Z M14 8.5L12 7V10Z" fill="#c4c4c4"/><path d="M0.5 16.5L3 16.5L0.5 14Z M16.5 0.5L14 0.5L16.5 3Z" fill="#c4c4c4"/></svg>

<!-- gizmo -->
<div class="a" style="left:1361px;top:137px;width:16px;height:1px;background:#6c6e72;box-shadow:0 4px 0 #6c6e72"></div>
<div class="t" style="left:1406px;top:139.3px;font-size:12px;font-weight:bold;color:#e6e6e6">z</div>
<svg style="left:1438px;top:144px" width="9" height="11" viewBox="0 0 9 11"><path d="M2 5V3Q2 0.8 4.5 0.8Q7 0.8 7 3V3.5" fill="none" stroke="#e0e0e0" stroke-width="1.2"/><rect x="0.5" y="5" width="8" height="5.5" fill="#e0e0e0"/></svg>
<svg style="left:1383px;top:154px" width="65" height="54" viewBox="0 0 65 54">
<defs><linearGradient id="gb" x1="0" y1="0" x2="0" y2="1"><stop offset="0" stop-color="#4a78e8"/><stop offset="1" stop-color="#5f8ff0"/></linearGradient>
<linearGradient id="gr" x1="1" y1="0" x2="0" y2="0"><stop offset="0" stop-color="#d9483a"/><stop offset="1" stop-color="#e8604a"/></linearGradient>
<linearGradient id="gg" x1="0" y1="0" x2="1" y2="0"><stop offset="0" stop-color="#cfcfcf"/><stop offset="1" stop-color="#f2f2f2"/></linearGradient>
<linearGradient id="gg2" x1="0" y1="1" x2="0" y2="0"><stop offset="0" stop-color="#cfcfcf"/><stop offset="1" stop-color="#f0f0f0"/></linearGradient></defs>
<path d="M21 1H33L27 17.5Z" fill="url(#gb)"/>
<rect x="21" y="21" width="12.5" height="12" fill="#f2f2f2"/>
<path d="M0.8 21L17.5 27L0.8 33Z" fill="url(#gg)"/>
<path d="M53 21L36.3 27L53 33Z" fill="url(#gr)"/>
<path d="M21 53H33L27 36.3Z" fill="url(#gg2)"/>
</svg>
<div class="t" style="left:1440.5px;top:173.3px;font-size:12px;font-weight:bold;color:#e6e6e6">x</div>
<svg style="left:1390px;top:228px" width="10" height="8" viewBox="0 0 10 8"><path d="M0 0.6H10 M0 3.8H10 M0 7H10" stroke="#c8c8c8" stroke-width="1.1"/></svg>
<div class="t" style="left:1403px;top:225px;font-size:12.4px;color:#c8c8c8">Top</div>

<!-- center cube -->
<svg style="left:720px;top:290px" width="200" height="180" viewBox="0 0 1161 1045">
<path d="M562,188 Q575,183 588,188 L875,308 Q903,320 903,350 L903,708 Q903,738 876,750 L588,878 Q575,884 562,878 L279,750 Q252,738 252,708 L252,350 Q252,320 280,308 Z" fill="none" stroke="#a7a5a3" stroke-width="54" stroke-linejoin="round"/>
<path d="M252,342 L575,478 L903,342 M575,478 V884" fill="none" stroke="#a7a5a3" stroke-width="52" stroke-linejoin="miter"/>
<path d="M420,330 L565,268 Q575,264 585,268 L735,330 L575,396 Z" fill="#709cb4"/>
<path d="M333,472 L495,540 V770 L375,718 Q333,700 333,660 Z" fill="#77b4d6"/>
<path d="M333,472 L495,540 V622 L333,554 Z" fill="#6f9bb4"/>
<path d="M820,472 L657,540 V770 L778,718 Q820,700 820,660 Z" fill="#77b4d6"/>
<path d="M820,472 L657,540 V622 L820,554 Z" fill="#6f9bb4"/>
</svg>
<div class="a" style="left:823px;top:315px;width:1px;height:135px;background:rgba(150,150,150,0.35)"></div>
<div class="a" style="left:758px;top:382px;width:124px;height:1px;background:rgba(150,150,150,0.35)"></div>

<!-- bottom overlay toolbar -->
<div class="a" style="left:500px;top:607px;width:215px;height:26px;background:#141414;border-radius:4px"></div>
<div class="a" style="left:503px;top:610px;width:43px;height:20px;background:#46607c"></div>
<div class="a" style="left:547px;top:610px;width:32px;height:20px;background:#575757"></div>
<div class="a" style="left:580px;top:610px;width:32px;height:20px;background:#46607c"></div>
<div class="a" style="left:613px;top:610px;width:32px;height:20px;background:#575757"></div>
<div class="a" style="left:646px;top:610px;width:32px;height:20px;background:#575757"></div>
<div class="a" style="left:679px;top:610px;width:32px;height:20px;background:#575757;border-radius:0 3px 3px 0"></div>
<svg style="left:556px;top:613px" width="13" height="13" viewBox="0 0 13 13"><circle cx="5" cy="5" r="4" fill="none" stroke="#d0d0d0" stroke-width="1.1"/><path d="M8 8L11.5 11.5" stroke="#d0d0d0" stroke-width="1.6"/></svg>
<svg style="left:589px;top:613px" width="14" height="14" viewBox="0 0 14 14"><rect x="5.3" y="5.3" width="3.4" height="3.4" fill="none" stroke="#e0e0e0" stroke-width="1"/><path d="M7 0.5V4.5 M7 9.5V13.5 M0.5 7H4.5 M9.5 7H13.5" stroke="#e0e0e0" stroke-width="1.1"/><circle cx="7" cy="1.5" r="1.4" fill="#e0e0e0"/><circle cx="7" cy="12.5" r="1.4" fill="#e0e0e0"/><circle cx="1.5" cy="7" r="1.4" fill="#e0e0e0"/><circle cx="12.5" cy="7" r="1.4" fill="#e0e0e0"/></svg>
<svg style="left:622px;top:613px" width="14" height="14" viewBox="0 0 14 14"><rect x="0" y="0.5" width="9" height="7" fill="#d0d0d0"/><path d="M9.5 4L12.5 1.5V7L9.5 5Z" fill="#d0d0d0"/><path d="M4 11Q8.5 7 13 11Q8.5 15 4 11Z" fill="none" stroke="#d0d0d0" stroke-width="1.1"/><circle cx="8.5" cy="11" r="1.5" fill="#d0d0d0"/></svg>
<svg style="left:655px;top:613px" width="14" height="14" viewBox="0 0 14 14"><circle cx="7" cy="7" r="6.3" fill="none" stroke="#d0d0d0" stroke-width="1.1"/><path d="M10.5 3.5L8 8L3.5 10.5L6 6Z" fill="none" stroke="#d0d0d0" stroke-width="1"/></svg>
<svg style="left:688px;top:613px" width="15" height="13" viewBox="0 0 15 13"><path d="M0.5 3.5H4Q6 3.5 7.5 6.5Q9 9.5 11 9.5H12 M0.5 9.5H4Q6 9.5 7.5 6.5Q9 3.5 11 3.5H12" fill="none" stroke="#a98cf0" stroke-width="1.1"/><path d="M11 0.5L14.5 3.5L11 6.5Z M11 6.5L14.5 9.5L11 12.5Z" fill="#a98cf0"/></svg>

<!-- INSPECTOR -->
<div class="a" id="insp" style="left:1467px;top:103px;width:453px;height:915px;background:#383838"></div>
<div class="a" style="left:1467px;top:79px;width:95px;height:24px;background:#3c3c3c;border-radius:4px 4px 0 0"></div>
<svg style="left:1478px;top:86px" width="11" height="11" viewBox="0 0 11 11"><circle cx="5.5" cy="5.5" r="5.3" fill="#c4c4c4"/><rect x="4.6" y="4.5" width="1.8" height="4.5" fill="#3c3c3c"/><rect x="4.6" y="2" width="1.8" height="1.7" fill="#3c3c3c"/></svg>
<div class="t" style="left:1493px;top:85.7px;font-size:12.4px;color:#c4c4c4">Inspector</div>
<svg style="left:1885px;top:86px" width="9" height="11" viewBox="0 0 9 11"><path d="M1.5 2.6Q3 0.8 4.6 0.8Q6.6 0.8 6.6 3.2V6" fill="none" stroke="#cfcfcf" stroke-width="1.1"/><rect x="0.6" y="5.6" width="6.8" height="4.4" rx="0.6" fill="none" stroke="#cfcfcf" stroke-width="1.1"/></svg>
<div class="a" style="left:1905px;top:86px;width:2px;height:2px;background:#c4c4c4;box-shadow:0 4px 0 #c4c4c4,0 8px 0 #c4c4c4"></div>


<!-- PROJECT -->
<div class="a" id="proj" style="left:0;top:661px;width:1465px;height:357px;background:#333"></div>
<div class="a" style="left:0;top:637px;width:81px;height:24px;background:#3c3c3c;border-radius:0 4px 0 0"></div>
<svg style="left:9px;top:645px" width="12" height="10" viewBox="0 0 12 10"><path d="M0 0.5H4.5L5.8 2H12V10H0Z" fill="#c4c4c4"/></svg>
<div class="t" style="left:25.6px;top:644.2px;font-size:12.4px;color:#c4c4c4">Project</div>
<svg style="left:92px;top:644px" width="10" height="11" viewBox="0 0 10 11"><rect x="0" y="0" width="10" height="11" rx="1" fill="#c4c4c4"/><path d="M2 2.5H8 M2 4.5H8 M2 6.5H6.5 M2 8.5H8" stroke="#131313" stroke-width="1"/></svg>
<div class="t" style="left:107px;top:644.2px;font-size:12.4px;color:#c4c4c4">Console</div>
<svg style="left:1431px;top:644px" width="9" height="11" viewBox="0 0 9 11"><path d="M1.5 2.6Q3 0.8 4.6 0.8Q6.6 0.8 6.6 3.2V6" fill="none" stroke="#cfcfcf" stroke-width="1.1"/><rect x="0.6" y="5.6" width="6.8" height="4.4" rx="0.6" fill="none" stroke="#cfcfcf" stroke-width="1.1"/></svg>
<div class="a" style="left:1451px;top:644px;width:2px;height:2px;background:#c4c4c4;box-shadow:0 4px 0 #c4c4c4,0 8px 0 #c4c4c4"></div>
<!-- project toolbar -->
<div class="a" style="left:0;top:661px;width:1465px;height:21px;background:#3c3c3c;border-bottom:1px solid #242424"></div>
<svg style="left:7px;top:665px" width="13" height="13" viewBox="0 0 13 13"><path d="M6.25 0V12.5 M0 6.25H12.5" stroke="#9a9a9a" stroke-width="1.6"/></svg>
<svg style="left:23px;top:669px" width="8" height="5" viewBox="0 0 8 5"><path d="M0 0H8L4 4.3Z" fill="#8a8a8a"/></svg>
<div class="a" style="left:999px;top:663px;width:318px;height:16px;background:#2a2a2a;border:1px solid #212121;border-top-color:#0f0f0f;border-radius:3px"></div>
<svg style="left:1003px;top:666px" width="9" height="9" viewBox="0 0 9 9"><circle cx="3.5" cy="3.5" r="2.6" fill="none" stroke="#c4c4c4" stroke-width="1.2"/><path d="M5.3 5.3L8.3 8.3" stroke="#c4c4c4" stroke-width="1.4"/></svg>
<div class="a" style="left:1299px;top:664px;width:17px;height:14px;background:#303030"></div>
<svg style="left:1302px;top:664px" width="13" height="13" viewBox="0 0 13 13"><rect x="4" y="0.6" width="8.4" height="8.4" fill="none" stroke="#c4c4c4" stroke-width="1.1"/><rect x="0.6" y="8" width="3.8" height="3.8" fill="#303030" stroke="#c4c4c4" stroke-width="1.1"/><path d="M5.5 7L10 2.5 M7 2.5H10V5.5" fill="none" stroke="#c4c4c4" stroke-width="1.1"/></svg>
<div class="a" style="left:1320px;top:661px;width:1px;height:20px;background:#2a2a2a"></div>
<div class="a" style="left:1346px;top:661px;width:1px;height:20px;background:#2a2a2a"></div>
<div class="a" style="left:1372px;top:661px;width:1px;height:20px;background:#2a2a2a"></div>
<div class="a" style="left:1398px;top:661px;width:1px;height:20px;background:#2a2a2a"></div>
<div class="a" style="left:1424px;top:661px;width:1px;height:20px;background:#2a2a2a"></div>
<svg style="left:1327px;top:664px" width="13" height="13" viewBox="0 0 13 13"><rect x="2.5" y="0.5" width="5" height="5" fill="#c4c4c4"/><circle cx="3.8" cy="9.2" r="3.3" fill="#c4c4c4"/><path d="M9.5 3L13 9H6Z" fill="#c4c4c4"/></svg>
<svg style="left:1353px;top:665px" width="12" height="12" viewBox="0 0 12 12"><path d="M6.5 0.5H11.5V5.5L5.5 11.5L0.5 6.5Z" fill="#c4c4c4"/><circle cx="9" cy="3" r="1" fill="#3c3c3c"/></svg>
<svg style="left:1379px;top:664px" width="13" height="13" viewBox="0 0 13 13"><circle cx="6.5" cy="6.5" r="6.3" fill="#c4c4c4"/><rect x="5.6" y="2.5" width="1.8" height="5.2" fill="#3c3c3c"/><rect x="5.6" y="8.8" width="1.8" height="1.8" fill="#3c3c3c"/></svg>
<svg style="left:1405px;top:665px" width="12" height="12" viewBox="0 0 12 12"><path d="M6 0.3L7.6 4.2L11.7 4.4L8.5 7L9.6 11.2L6 8.8L2.4 11.2L3.5 7L0.3 4.4L4.4 4.2Z" fill="#8e8e8e"/></svg>
<svg style="left:1431px;top:666px" width="14" height="9" viewBox="0 0 14 9"><path d="M0.6 4.5Q7 -2 13.4 4.5Q7 11 0.6 4.5Z" fill="none" stroke="#8a8a8a" stroke-width="1.2"/><circle cx="7" cy="4" r="2.4" fill="#8a8a8a"/></svg>
<div class="t" style="left:1447px;top:664.5px;font-size:12.4px;color:#c4c4c4">31</div>
<!-- left tree -->
<div class="a" style="left:0;top:682px;width:194px;height:336px;background:#333"></div>
<div class="a" style="left:194px;top:682px;width:13px;height:336px;background:#2c2c2c"></div>
<div class="a" style="left:207px;top:682px;width:1px;height:336px;background:#232323"></div>
<div class="a" style="left:196px;top:703px;width:10px;height:132px;background:#5e5e5e;border-radius:5px"></div>
<svg style="left:197px;top:687px" width="8" height="5" viewBox="0 0 8 5"><path d="M0 4.5H8L4 0Z" fill="#c4c4c4"/></svg>
<svg style="left:197px;top:1007px" width="8" height="5" viewBox="0 0 8 5"><path d="M0 0H8L4 4.5Z" fill="#c4c4c4"/></svg>
<div class="a" style="left:0;top:1002px;width:194px;height:16px;background:#454545"></div>
<!-- right area -->
<div class="a" style="left:208px;top:682px;width:1257px;height:21px;background:#404040"></div>
<div class="a" style="left:208px;top:997px;width:1257px;height:21px;background:#404040"></div>
<div class="a" style="left:1394px;top:1007px;width:55px;height:1px;background:#8a8a8a"></div>
<div class="a" style="left:1421px;top:1003px;width:10px;height:10px;border-radius:5px;background:#a6a6a6"></div>
<div class="a" style="left:1465px;top:635px;width:2px;height:383px;background:#131313"></div>
<svg style="left:32px;top:686px" width="12" height="12" viewBox="0 0 12 12"><circle cx="4.8" cy="4.8" r="4" fill="none" stroke="#c4c4c4" stroke-width="1.2"/><path d="M7.6 7.6L11.2 11.2" stroke="#c4c4c4" stroke-width="1.7"/></svg><div class="t" style="left:48px;top:684.6px;font-size:12px;letter-spacing:0.28px;color:#c4c4c4">All Materials</div>
<svg style="left:32px;top:702px" width="12" height="12" viewBox="0 0 12 12"><circle cx="4.8" cy="4.8" r="4" fill="none" stroke="#c4c4c4" stroke-width="1.2"/><path d="M7.6 7.6L11.2 11.2" stroke="#c4c4c4" stroke-width="1.7"/></svg><div class="t" style="left:48px;top:700.6px;font-size:12px;letter-spacing:0.28px;color:#c4c4c4">All Models</div>
<svg style="left:32px;top:718px" width="12" height="12" viewBox="0 0 12 12"><circle cx="4.8" cy="4.8" r="4" fill="none" stroke="#c4c4c4" stroke-width="1.2"/><path d="M7.6 7.6L11.2 11.2" stroke="#c4c4c4" stroke-width="1.7"/></svg><div class="t" style="left:48px;top:716.6px;font-size:12px;letter-spacing:0.28px;color:#c4c4c4">All Prefabs</div>
<svg style="left:4px;top:749.8px" width="9" height="8" viewBox="0 0 9 8"><path d="M0 0H9L4.5 7.5Z" fill="#7e7e7e"/></svg><svg style="left:18px;top:748.8px" width="14" height="11" viewBox="0 0 14 11"><path d="M0.5 10.5V0.5H4.8L6 1.8H11V4" fill="none" stroke="#c4c4c4" stroke-width="1.1"/><path d="M0.5 10.5L3 4.5H13.8L11.2 10.5Z" fill="#c4c4c4"/></svg><div class="t" style="left:35px;top:747.4px;font-size:12px;font-weight:bold;letter-spacing:0.1px;color:#c4c4c4">Assets</div>
<svg style="left:32px;top:765.8px" width="12" height="10" viewBox="0 0 12 10"><path d="M0 0H4.5L5.8 1.5H12V10H0Z" fill="#c4c4c4"/></svg><div class="t" style="left:48px;top:763.4px;font-size:12px;letter-spacing:0.28px;color:#c4c4c4">Scenes</div>
<svg style="left:32px;top:781.8px" width="12" height="10" viewBox="0 0 12 10"><path d="M0 0H4.5L5.8 1.5H12V10H0Z" fill="#c4c4c4"/></svg><div class="t" style="left:48px;top:779.4px;font-size:12px;letter-spacing:0.28px;color:#c4c4c4">Settings</div>
<svg style="left:4px;top:797.8px" width="9" height="8" viewBox="0 0 9 8"><path d="M0 0H9L4.5 7.5Z" fill="#7e7e7e"/></svg><svg style="left:18px;top:796.8px" width="14" height="11" viewBox="0 0 14 11"><path d="M0.5 10.5V0.5H4.8L6 1.8H11V4" fill="none" stroke="#c4c4c4" stroke-width="1.1"/><path d="M0.5 10.5L3 4.5H13.8L11.2 10.5Z" fill="#c4c4c4"/></svg><div class="t" style="left:35px;top:795.4px;font-size:12px;font-weight:bold;letter-spacing:0.1px;color:#c4c4c4">Packages</div>
<svg style="left:20px;top:812.8px" width="8" height="9" viewBox="0 0 8 9"><path d="M0 0V9L7.5 4.5Z" fill="#7e7e7e"/></svg><svg style="left:32px;top:813.8px" width="12" height="10" viewBox="0 0 12 10"><path d="M0 0H4.5L5.8 1.5H12V10H0Z" fill="#c4c4c4"/></svg><div class="t" style="left:48px;top:811.4px;font-size:12px;letter-spacing:0.28px;color:#c4c4c4">2D Animation</div>
<svg style="left:20px;top:828.8px" width="8" height="9" viewBox="0 0 8 9"><path d="M0 0V9L7.5 4.5Z" fill="#7e7e7e"/></svg><svg style="left:32px;top:829.8px" width="12" height="10" viewBox="0 0 12 10"><path d="M0 0H4.5L5.8 1.5H12V10H0Z" fill="#c4c4c4"/></svg><div class="t" style="left:48px;top:827.4px;font-size:12px;letter-spacing:0.28px;color:#c4c4c4">2D Aseprite Importer</div>
<svg style="left:20px;top:844.8px" width="8" height="9" viewBox="0 0 8 9"><path d="M0 0V9L7.5 4.5Z" fill="#7e7e7e"/></svg><svg style="left:32px;top:845.8px" width="12" height="10" viewBox="0 0 12 10"><path d="M0 0H4.5L5.8 1.5H12V10H0Z" fill="#c4c4c4"/></svg><div class="t" style="left:48px;top:843.4px;font-size:12px;letter-spacing:0.28px;color:#c4c4c4">2D Common</div>
<svg style="left:20px;top:860.8px" width="8" height="9" viewBox="0 0 8 9"><path d="M0 0V9L7.5 4.5Z" fill="#7e7e7e"/></svg><svg style="left:32px;top:861.8px" width="12" height="10" viewBox="0 0 12 10"><path d="M0 0H4.5L5.8 1.5H12V10H0Z" fill="#c4c4c4"/></svg><div class="t" style="left:48px;top:859.4px;font-size:12px;letter-spacing:0.28px;color:#c4c4c4">2D Pixel Perfect</div>
<svg style="left:20px;top:876.8px" width="8" height="9" viewBox="0 0 8 9"><path d="M0 0V9L7.5 4.5Z" fill="#7e7e7e"/></svg><svg style="left:32px;top:877.8px" width="12" height="10" viewBox="0 0 12 10"><path d="M0 0H4.5L5.8 1.5H12V10H0Z" fill="#c4c4c4"/></svg><div class="t" style="left:48px;top:875.4px;font-size:12px;letter-spacing:0.28px;color:#c4c4c4">2D PSD Importer</div>
<svg style="left:18.5px;top:893.8px" width="9" height="8" viewBox="0 0 9 8"><path d="M0 0H9L4.5 7.5Z" fill="#7e7e7e"/></svg><svg style="left:32px;top:892.8px" width="14" height="11" viewBox="0 0 14 11"><path d="M0.5 10.5V0.5H4.8L6 1.8H11V4" fill="none" stroke="#c4c4c4" stroke-width="1.1"/><path d="M0.5 10.5L3 4.5H13.8L11.2 10.5Z" fill="#c4c4c4"/></svg><div class="t" style="left:48px;top:891.4px;font-size:12px;letter-spacing:0.28px;color:#c4c4c4">2D Sprite</div>
<svg style="left:32.5px;top:909.8px" width="9" height="8" viewBox="0 0 9 8"><path d="M0 0H9L4.5 7.5Z" fill="#7e7e7e"/></svg><svg style="left:46px;top:908.8px" width="14" height="11" viewBox="0 0 14 11"><path d="M0.5 10.5V0.5H4.8L6 1.8H11V4" fill="none" stroke="#c4c4c4" stroke-width="1.1"/><path d="M0.5 10.5L3 4.5H13.8L11.2 10.5Z" fill="#c4c4c4"/></svg><div class="t" style="left:62.5px;top:907.4px;font-size:12px;letter-spacing:0.28px;color:#c4c4c4">Editor</div>
<svg style="left:60px;top:925.8px" width="12" height="10" viewBox="0 0 12 10"><path d="M0 0H4.5L5.8 1.5H12V10H0Z" fill="#c4c4c4"/></svg><div class="t" style="left:76.2px;top:923.4px;font-size:12px;letter-spacing:0.28px;color:#c4c4c4">Assets</div>
<svg style="left:60px;top:941.8px" width="12" height="10" viewBox="0 0 12 10"><path d="M0 0H4.5L5.8 1.5H12V10H0Z" fill="#c4c4c4"/></svg><div class="t" style="left:76.2px;top:939.4px;font-size:12px;letter-spacing:0.28px;color:#c4c4c4">Interface</div>
<svg style="left:46.5px;top:957.8px" width="9" height="8" viewBox="0 0 9 8"><path d="M0 0H9L4.5 7.5Z" fill="#7e7e7e"/></svg><svg style="left:60px;top:956.8px" width="14" height="11" viewBox="0 0 14 11"><path d="M0.5 10.5V0.5H4.8L6 1.8H11V4" fill="none" stroke="#c4c4c4" stroke-width="1.1"/><path d="M0.5 10.5L3 4.5H13.8L11.2 10.5Z" fill="#c4c4c4"/></svg><div class="a" style="left:0;top:952.8px;width:194px;height:17px;overflow:hidden"><div class="t" style="left:76.2px;top:2.6px;font-size:12px;letter-spacing:0.28px;color:#c4c4c4">ObjectMenuCreation</div>
</div><svg style="left:60.5px;top:973.8px" width="9" height="8" viewBox="0 0 9 8"><path d="M0 0H9L4.5 7.5Z" fill="#7e7e7e"/></svg><svg style="left:74px;top:972.8px" width="14" height="11" viewBox="0 0 14 11"><path d="M0.5 10.5V0.5H4.8L6 1.8H11V4" fill="none" stroke="#c4c4c4" stroke-width="1.1"/><path d="M0.5 10.5L3 4.5H13.8L11.2 10.5Z" fill="#c4c4c4"/></svg><div class="t" style="left:90.5px;top:971.4px;font-size:12px;letter-spacing:0.28px;color:#c4c4c4">DefaultAssets</div>
<svg style="left:74.5px;top:989.8px" width="9" height="8" viewBox="0 0 9 8"><path d="M0 0H9L4.5 7.5Z" fill="#7e7e7e"/></svg><svg style="left:88px;top:988.8px" width="14" height="11" viewBox="0 0 14 11"><path d="M0.5 10.5V0.5H4.8L6 1.8H11V4" fill="none" stroke="#c4c4c4" stroke-width="1.1"/><path d="M0.5 10.5L3 4.5H13.8L11.2 10.5Z" fill="#c4c4c4"/></svg><div class="t" style="left:104.4px;top:987.4px;font-size:12px;letter-spacing:0.28px;color:#c4c4c4">Textures</div>
<svg style="left:102.5px;top:1005.8px" width="12" height="10" viewBox="0 0 12 10"><path d="M0 0H4.5L5.8 1.5H12V10H0Z" fill="#c4c4c4"/></svg><div class="t" style="left:118px;top:1003.4px;font-size:12px;letter-spacing:0.28px;color:#c4c4c4">v2</div>


<!-- STATUS BAR -->
<div class="a" style="left:0;top:1018px;width:1920px;height:22px;background:#131313"></div>
<div class="a" style="left:0;top:1040px;width:1920px;height:5px;background:#1b1d21"></div>
<div class="a" style="left:48px;top:1040px;width:288px;height:5px;background:#3a3a3a;border:1px solid #6a6a6a;border-bottom:none"></div>
<div class="a" style="left:778px;top:1040px;width:50px;height:5px;background:#333"></div>
<div class="a" style="left:1840px;top:1020px;width:1px;height:20px;background:#262626;box-shadow:26px 0 0 #262626,53px 0 0 #262626,78px 0 0 #262626"></div>
<svg style="left:1846px;top:1022px" width="15" height="16" viewBox="0 0 15 16"><ellipse cx="7.2" cy="9.2" rx="4.6" ry="5.6" fill="#d0d0d0"/><ellipse cx="7.2" cy="3.4" rx="3" ry="2.4" fill="#d0d0d0"/><path d="M1 1.5L3.3 4 M13.3 1.5L11 4 M0.3 8.5H3 M14 8.5H11.4 M1 15L3.3 12.5 M13.3 15L11 12.5" stroke="#d0d0d0" stroke-width="1.3"/><path d="M0.5 0.5L14.5 15" stroke="#131313" stroke-width="2"/><path d="M0.3 0.3L14.3 14.8" stroke="#d0d0d0" stroke-width="0.6"/></svg>
<svg style="left:1873px;top:1022px" width="15" height="16" viewBox="0 0 15 16"><ellipse cx="7" cy="3.5" rx="6.5" ry="3" fill="#d0d0d0"/><path d="M0.5 5.5Q7 10 13.5 5.5V8Q7 12.5 0.5 8Z M0.5 10Q7 14.5 13.5 10V12.5Q7 17 0.5 12.5Z" fill="#d0d0d0"/><path d="M0.5 0.5L14.5 15" stroke="#131313" stroke-width="2"/><path d="M0.3 0.3L14.3 14.8" stroke="#d0d0d0" stroke-width="0.6"/></svg>
<svg style="left:1899px;top:1023px" width="15" height="15" viewBox="0 0 15 15"><circle cx="7" cy="7" r="6.4" fill="none" stroke="#d0d0d0" stroke-width="1.1"/><path d="M4 7.2L6.2 9.4L10 5.2" fill="none" stroke="#d0d0d0" stroke-width="1.5"/></svg>
<div class="a" style="left:1915px;top:1040px;width:1px;height:5px;background:#aaa"></div>


<!-- CONTEXT MENU -->
<div class="a" style="left:214px;top:348px;width:322px;height:628px;background:#f2f2f2;border:1px solid #fafafa;box-shadow:1px 1px 0 #1a1a1a,2px 2px 3px rgba(0,0,0,0.75),0 0 1px rgba(0,0,0,0.5)"></div>
<div class="a" style="left:217px;top:687px;width:313px;height:22px;background:#91c9f7"></div>
<div class="t" style="left:249px;top:356.85px;font-size:11.4px;color:#6d6d6d">Cut</div>
<div class="t" style="right:1404.5px;top:356.85px;font-size:11.4px;color:#6d6d6d">Ctrl+X</div>
<div class="t" style="left:249px;top:378.85px;font-size:11.4px;color:#6d6d6d">Copy</div>
<div class="t" style="right:1404.5px;top:378.85px;font-size:11.4px;color:#6d6d6d">Ctrl+C</div>
<div class="t" style="left:249px;top:400.85px;font-size:11.4px;color:#6d6d6d">Paste</div>
<div class="t" style="right:1404.5px;top:400.85px;font-size:11.4px;color:#6d6d6d">Ctrl+V</div>
<div class="t" style="left:249px;top:422.85px;font-size:11.4px;color:#6d6d6d">Paste Special</div>
<div class="t" style="left:249px;top:444.85px;font-size:11.4px;color:#6d6d6d">Rename</div>
<div class="t" style="left:249px;top:466.85px;font-size:11.4px;color:#6d6d6d">Duplicate</div>
<div class="t" style="right:1404.5px;top:466.85px;font-size:11.4px;color:#6d6d6d">Ctrl+D</div>
<div class="t" style="left:249px;top:488.85px;font-size:11.4px;color:#6d6d6d">Delete</div>
<div class="t" style="right:1404.5px;top:488.85px;font-size:11.4px;color:#6d6d6d">Del</div>
<div class="a" style="left:245px;top:508px;width:288px;height:1px;background:#d7d7d7"></div>
<div class="t" style="left:249px;top:517.85px;font-size:11.4px;color:#000">Select All</div>
<div class="t" style="left:249px;top:539.85px;font-size:11.4px;color:#6d6d6d">Deselect All</div>
<div class="t" style="left:249px;top:561.85px;font-size:11.4px;color:#6d6d6d">Invert Selection</div>
<div class="t" style="left:249px;top:583.85px;font-size:11.4px;color:#6d6d6d">Select Children</div>
<div class="a" style="left:245px;top:603px;width:288px;height:1px;background:#d7d7d7"></div>
<div class="t" style="left:249px;top:612.85px;font-size:11.4px;color:#6d6d6d">Find References in Scene</div>
<div class="a" style="left:245px;top:632px;width:288px;height:1px;background:#d7d7d7"></div>
<div class="t" style="left:249px;top:641.85px;font-size:11.4px;color:#6d6d6d">Set as Default Parent</div>
<div class="a" style="left:245px;top:661px;width:288px;height:1px;background:#d7d7d7"></div>
<div class="t" style="left:249px;top:670.85px;font-size:11.4px;color:#000">Create Empty</div>
<div class="t" style="right:1404.5px;top:670.85px;font-size:11.4px;color:#000">Ctrl+Shift+N</div>
<div class="t" style="left:249px;top:692.85px;font-size:11.4px;color:#000">2D Object</div>
<svg style="left:519px;top:693.0px" width="6" height="9" viewBox="0 0 6 9"><path d="M0.8 0.8L4.6 4.5L0.8 8.2" fill="none" stroke="#333" stroke-width="1.1"/></svg>
<div class="t" style="left:249px;top:714.85px;font-size:11.4px;color:#000">3D Object</div>
<svg style="left:519px;top:715.0px" width="6" height="9" viewBox="0 0 6 9"><path d="M0.8 0.8L4.6 4.5L0.8 8.2" fill="none" stroke="#333" stroke-width="1.1"/></svg>
<div class="t" style="left:249px;top:736.85px;font-size:11.4px;color:#000">Effects</div>
<svg style="left:519px;top:737.0px" width="6" height="9" viewBox="0 0 6 9"><path d="M0.8 0.8L4.6 4.5L0.8 8.2" fill="none" stroke="#333" stroke-width="1.1"/></svg>
<div class="t" style="left:249px;top:758.85px;font-size:11.4px;color:#000">Light</div>
<svg style="left:519px;top:759.0px" width="6" height="9" viewBox="0 0 6 9"><path d="M0.8 0.8L4.6 4.5L0.8 8.2" fill="none" stroke="#333" stroke-width="1.1"/></svg>
<div class="t" style="left:249px;top:780.85px;font-size:11.4px;color:#000">Audio</div>
<svg style="left:519px;top:781.0px" width="6" height="9" viewBox="0 0 6 9"><path d="M0.8 0.8L4.6 4.5L0.8 8.2" fill="none" stroke="#333" stroke-width="1.1"/></svg>
<div class="t" style="left:249px;top:802.85px;font-size:11.4px;color:#000">Video</div>
<svg style="left:519px;top:803.0px" width="6" height="9" viewBox="0 0 6 9"><path d="M0.8 0.8L4.6 4.5L0.8 8.2" fill="none" stroke="#333" stroke-width="1.1"/></svg>
<div class="t" style="left:249px;top:824.85px;font-size:11.4px;color:#000">UI</div>
<svg style="left:519px;top:825.0px" width="6" height="9" viewBox="0 0 6 9"><path d="M0.8 0.8L4.6 4.5L0.8 8.2" fill="none" stroke="#333" stroke-width="1.1"/></svg>
<div class="t" style="left:249px;top:846.85px;font-size:11.4px;color:#000">AI</div>
<svg style="left:519px;top:847.0px" width="6" height="9" viewBox="0 0 6 9"><path d="M0.8 0.8L4.6 4.5L0.8 8.2" fill="none" stroke="#333" stroke-width="1.1"/></svg>
<div class="t" style="left:249px;top:868.85px;font-size:11.4px;color:#000">UI Toolkit</div>
<svg style="left:519px;top:869.0px" width="6" height="9" viewBox="0 0 6 9"><path d="M0.8 0.8L4.6 4.5L0.8 8.2" fill="none" stroke="#333" stroke-width="1.1"/></svg>
<div class="t" style="left:249px;top:890.85px;font-size:11.4px;color:#000">Rendering</div>
<svg style="left:519px;top:891.0px" width="6" height="9" viewBox="0 0 6 9"><path d="M0.8 0.8L4.6 4.5L0.8 8.2" fill="none" stroke="#333" stroke-width="1.1"/></svg>
<div class="t" style="left:249px;top:912.85px;font-size:11.4px;color:#000">Volume</div>
<svg style="left:519px;top:913.0px" width="6" height="9" viewBox="0 0 6 9"><path d="M0.8 0.8L4.6 4.5L0.8 8.2" fill="none" stroke="#333" stroke-width="1.1"/></svg>
<div class="t" style="left:249px;top:934.85px;font-size:11.4px;color:#000">Camera</div>
<div class="t" style="left:249px;top:956.85px;font-size:11.4px;color:#000">Visual Scripting Scene Variables</div>
<div class="a" style="left:530px;top:684px;width:226px;height:138px;background:#f2f2f2;border:1px solid #fafafa;box-shadow:1px 1px 0 #1a1a1a,2px 2px 3px rgba(0,0,0,0.75),0 0 1px rgba(0,0,0,0.5)"></div>
<div class="a" style="left:533px;top:687px;width:223px;height:22px;background:#91c9f7"></div>
<div class="t" style="left:565px;top:692.85px;font-size:11.4px;color:#000">Sprites</div>
<svg style="left:745.5px;top:693.0px" width="6" height="9" viewBox="0 0 6 9"><path d="M0.8 0.8L4.6 4.5L0.8 8.2" fill="none" stroke="#333" stroke-width="1.1"/></svg>
<div class="t" style="left:565px;top:714.85px;font-size:11.4px;color:#000">Physics</div>
<svg style="left:745.5px;top:715.0px" width="6" height="9" viewBox="0 0 6 9"><path d="M0.8 0.8L4.6 4.5L0.8 8.2" fill="none" stroke="#333" stroke-width="1.1"/></svg>
<div class="t" style="left:565px;top:736.85px;font-size:11.4px;color:#000">Tilemap</div>
<svg style="left:745.5px;top:737.0px" width="6" height="9" viewBox="0 0 6 9"><path d="M0.8 0.8L4.6 4.5L0.8 8.2" fill="none" stroke="#333" stroke-width="1.1"/></svg>
<div class="t" style="left:565px;top:758.85px;font-size:11.4px;color:#000">Sprite Shape</div>
<svg style="left:745.5px;top:759.0px" width="6" height="9" viewBox="0 0 6 9"><path d="M0.8 0.8L4.6 4.5L0.8 8.2" fill="none" stroke="#333" stroke-width="1.1"/></svg>
<div class="t" style="left:565px;top:780.85px;font-size:11.4px;color:#000">Pixel Perfect Camera (URP)</div>
<div class="t" style="left:565px;top:802.85px;font-size:11.4px;color:#000">Sprite Mask</div>
<div class="a" style="left:756px;top:684px;width:191px;height:182px;background:#f2f2f2;border:1px solid #fafafa;box-shadow:1px 1px 0 #1a1a1a,2px 2px 3px rgba(0,0,0,0.75),0 0 1px rgba(0,0,0,0.5)"></div>
<div class="a" style="left:759px;top:731px;width:185px;height:22px;background:#91c9f7"></div>
<div class="t" style="left:791px;top:692.85px;font-size:11.4px;color:#000">Triangle</div>
<div class="t" style="left:791px;top:714.85px;font-size:11.4px;color:#000">Square</div>
<div class="t" style="left:791px;top:736.85px;font-size:11.4px;color:#000">Circle</div>
<div class="t" style="left:791px;top:758.85px;font-size:11.4px;color:#000">Capsule</div>
<div class="t" style="left:791px;top:780.85px;font-size:11.4px;color:#000">Isometric Diamond</div>
<div class="t" style="left:791px;top:802.85px;font-size:11.4px;color:#000">Hexagon Flat Top</div>
<div class="t" style="left:791px;top:824.85px;font-size:11.4px;color:#000">Hexagon Point Top</div>
<div class="t" style="left:791px;top:846.85px;font-size:11.4px;color:#000">9-Sliced</div>
</body></html>
